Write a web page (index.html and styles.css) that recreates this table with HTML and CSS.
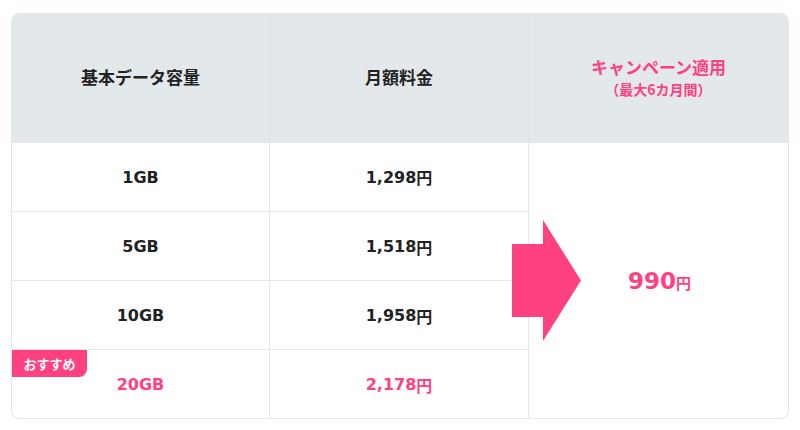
FILE: index.html
```html
<!DOCTYPE html>
<html lang="ja">
<head>
<meta charset="utf-8">
<link rel="stylesheet" href="styles.css">
</head>
<body>
<div class="plan">
  <div class="th">基本データ容量</div>
  <div class="th line">月額料金</div>
  <div class="th line campaign"><span class="ttl">キャンペーン適用</span><span class="sub">（最大6カ月間）</span></div>

  <div class="td first">1GB</div>
  <div class="td first line">1,298<span class="yen">円</span></div>
  <div class="deal">
    <svg class="arrow" viewBox="0 0 69 121" width="69" height="121"><polygon points="0,24 31,24 31,0 69,60.5 31,121 31,97 0,97" fill="#ff4081"/></svg>
    <span class="price">990<span class="yen">円</span></span>
  </div>

  <div class="td">5GB</div>
  <div class="td line">1,518<span class="yen">円</span></div>

  <div class="td">10GB</div>
  <div class="td line">1,958<span class="yen">円</span></div>

  <div class="td pink"><span class="badge">おすすめ</span>20GB</div>
  <div class="td line pink">2,178<span class="yen">円</span></div>
</div>
</body>
</html>
```

FILE: styles.css
```css
* { box-sizing: border-box; }
html, body { margin: 0; padding: 0; background: #fff; }
body {
  padding: 13px 11px;
  font-family: "DejaVu Sans", "Noto Sans CJK JP", sans-serif;
  color: #222;
}
.plan {
  width: 778px;
  height: 406px;
  border: 1px solid #e6e6e6;
  border-radius: 8px;
  overflow: hidden;
  display: grid;
  grid-template-columns: 257fr 259fr 260fr;
  grid-template-rows: 129px 68px 69px 69px 69px;
}
.th {
  background: #e3e8eb;
  display: flex;
  flex-direction: column;
  align-items: center;
  justify-content: center;
  font-family: "Noto Sans CJK JP", sans-serif;
  font-weight: 700;
  font-size: 17px;
  padding-bottom: 4px;
}
.th.line { border-left: 1px solid #dfe3e6; }
.campaign { color: #ff4081; line-height: 22px; padding-bottom: 2px; }
.campaign .ttl { font-size: 17px; }
.campaign .sub { font-size: 14px; }
.td {
  position: relative;
  display: flex;
  align-items: center;
  justify-content: center;
  font-weight: 700;
  font-size: 16px;
  border-top: 1px solid #e6e6e6;
  padding-top: 1px;
}
.td.first { border-top: none; padding-top: 0; }
.td.line { border-left: 1px solid #e6e6e6; }
.yen { font-family: "Noto Sans CJK JP", sans-serif; font-weight: 700; }
.pink { color: #ff4081; }
.badge {
  position: absolute;
  top: 0;
  left: 0;
  width: 75px;
  height: 27px;
  background: #ff4081;
  color: #fff;
  border-bottom-right-radius: 8px;
  font-family: "Noto Sans CJK JP", sans-serif;
  font-size: 13px;
  font-weight: 700;
  display: flex;
  align-items: center;
  justify-content: center;
}
.deal {
  grid-column: 3;
  grid-row: 2 / 6;
  position: relative;
  border-left: 1px solid #e6e6e6;
  display: flex;
  align-items: center;
  justify-content: center;
  color: #ff4081;
}
.arrow {
  position: absolute;
  z-index: 2;
  left: -17px;
  top: 77px;
  display: block;
}
.price {
  font-weight: 700;
  font-size: 23px;
  padding-left: 2px;
}
.price .yen { font-size: 15px; }
```
